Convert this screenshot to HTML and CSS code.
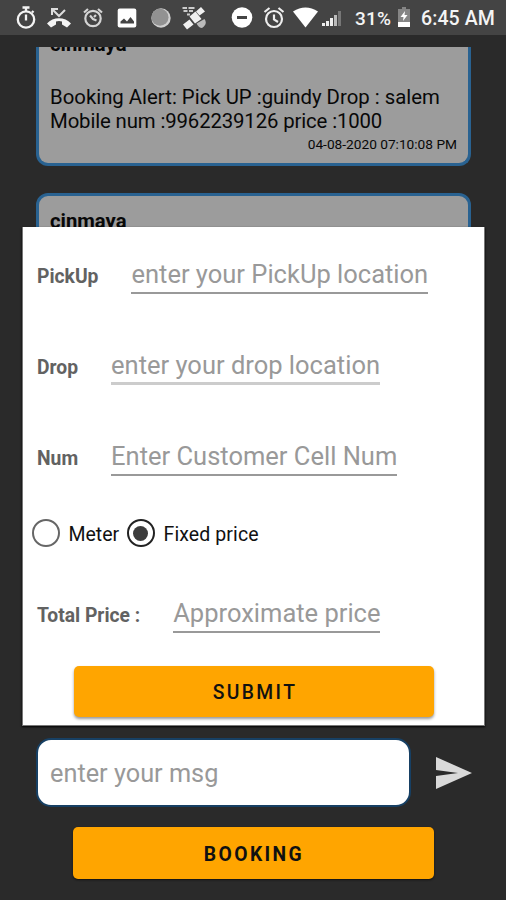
FILE: index.html
```html
<!DOCTYPE html>
<html lang="en">
<head>
<meta charset="utf-8">
<title>Booking</title>
<link rel="stylesheet" href="styles.css">
</head>
<body>
<div class="screen">
  <header class="status">
    <div class="notifications">
      <svg viewBox="0 0 22 24" fill="none" stroke="currentColor" stroke-width="2.3"><circle cx="11" cy="13.500" r="8.200"/><path d="M7.500 1.500h7M11 2v3M11 8.500v6M17 6.500l1.500-1.500"/></svg>
      <svg viewBox="0 0 26 24"><path fill="currentColor" d="M1 17.500C7 10.500 19 10.500 25 17.500l-4 4-5-3v-3q-3-1-6 0v3l-5 3z"/><path d="M6 9V3h6M6 3l7 7 6-6" fill="none" stroke="#ddd" stroke-width="2"/></svg>
      <svg viewBox="0 0 22 24" fill="none" stroke="#d4d4d4" stroke-width="2.200"><circle cx="11" cy="12.500" r="7.700"/><path d="M2 6.500l4-3.500M20 6.500l-4-3.500M8 9.500L11 13l3.500 1.500M14 9l-2 2"/></svg>
      <svg viewBox="0 0 22 24"><rect x="1.700" y="2.500" width="18.600" height="19" rx="2" fill="#fff"/><path fill="#444" d="M4.500 17.500v-2l3.500-3 3 3 3.500-4.500 3.500 4.500v2z"/></svg>
      <svg viewBox="0 0 22 24"><circle cx="11" cy="12" r="9.700" fill="#d0d0d0"/><circle cx="10" cy="11.200" r="8.500" fill="#929292"/></svg>
      <svg viewBox="0 0 26 24"><path fill="#f0f0f0" d="M15 5.500l5-4.500 4 4.500-5.500 4zM8.500 10.500l6-5 6 7.500-6.500 4.500zM2 18.500l6.500-5 4 5L6 23.500z"/><path fill="#bbb" d="M15.500 17.500l8-4.500q3.500 5-2.500 9-3 0-5.500-4.500z"/><path d="M1.500 2h4.500M7.500 2h6M2.500 5h4M8 5h4M6 8.500h3" fill="none" stroke="#ccc" stroke-width="2"/></svg>
    </div>
    <div class="system">
      <svg class="dnd" viewBox="0 0 22 24"><circle cx="11" cy="11.500" r="10.300" fill="#fff"/><path d="M6 11.500h10" stroke="#444" stroke-width="3"/></svg>
      <svg class="alarm" viewBox="0 0 22 24" fill="none" stroke="#eee" stroke-width="2.200"><circle cx="11" cy="13" r="8"/><path d="M1.500 6l5-4M20.500 6l-5-4M11 8.500v5l4 2.500"/></svg>
      <svg class="wifi" viewBox="0 0 25 24"><path fill="#fff" d="M0 5.500Q12.500-2.500 25 5.500L12.500 21.500z"/></svg>
      <svg class="signal" viewBox="0 0 19 24"><path fill="#eee" d="M0 17h3v3H0zM4 15h3v5H4zM8 12h3v8H8z"/><path fill="#bbb" d="M12 9h3v11h-3z"/><path fill="#777" d="M16 5h3v15h-3z"/></svg>
      <span class="percent">31%</span>
      <svg class="battery" viewBox="0 0 12 24"><path fill="#858585" d="M4 1h4v2h4v18H0V3h4z"/><path fill="#fff" d="M0 16h12v5H0zM7 5L2.500 11h3L5 15l4.500-6h-3z"/></svg>
      <span class="clock">6:45 AM</span>
    </div>
  </header>

  <main class="messages">
    <article class="card card-first">
      <div class="author">cinmaya</div>
      <p class="text">Booking Alert: Pick UP :guindy Drop : salem<br><span class="line-two">Mobile num :9962239126 price :1000</span></p>
      <div class="time">04-08-2020 07:10:08 PM</div>
    </article>
    <article class="card card-second">
      <div class="author">cinmaya</div>
    </article>
  </main>

  <footer class="composer">
    <div class="message-row">
      <div class="message-box">enter your msg</div>
      <svg class="send" viewBox="0 0 36 32"><path fill="#d9d9d9" d="M0 0l36 16L0 32V19l22-3L0 13z"/></svg>
    </div>
    <div class="button booking">BOOKING</div>
  </footer>

  <section class="dialog">
    <div class="field"><span class="label">PickUp</span><span class="input pickup">enter your PickUp location</span></div>
    <div class="field"><span class="label">Drop</span><span class="input drop">enter your drop location</span></div>
    <div class="field"><span class="label">Num</span><span class="input num">Enter Customer Cell Num</span></div>
    <div class="choices">
      <span class="radio"></span><span class="choice meter">Meter</span>
      <span class="radio checked"></span><span class="choice fixed">Fixed price</span>
    </div>
    <div class="field price-row"><span class="label total">Total Price :</span><span class="input price">Approximate price</span></div>
    <div class="button submit">SUBMIT</div>
  </section>
</div>
</body>
</html>
```
FILE: styles.css
```css
* { box-sizing: border-box; }
body { margin: 0; font-family: Roboto, "Liberation Sans", sans-serif; }
.screen {
  position: relative;
  display: flex;
  flex-direction: column;
  width: 506px;
  height: 900px;
  overflow: hidden;
  background: #2a2a2a;
  white-space: nowrap;
}
.status {
  display: flex;
  align-items: center;
  flex: 0 0 35px;
  background: #444;
  color: #f4f4f4;
}
.status svg { display: block; height: 24px; flex: none; }
.notifications { display: flex; width: 231px; padding-left: 12.5px; gap: 7.8px; }
.notifications svg { width: 26px; }
.system { display: flex; align-items: center; font-size: 18.5px; font-weight: 500; }
.dnd { width: 22px; margin-right: 10px; }
.alarm { width: 22px; margin-right: 8px; }
.wifi { width: 25px; margin-right: 4px; }
.signal { width: 19px; margin-right: 14px; }
.percent { width: 43px; padding-top: 1px; font-size: 19px; letter-spacing: 0.2px; }
.battery { width: 12px; margin-right: 11px; }
.clock { padding-top: 1px; font-size: 19.5px; letter-spacing: 0.1px; }

.messages { flex: 0 0 691px; margin-top: 12px; overflow: hidden; }
.card {
  width: 435px;
  margin-left: 36px;
  padding: 0 11px;
  border: 3px solid #296291;
  border-radius: 12px;
  background: #9c9c9c;
  color: #080808;
}
.card-first { height: 134px; border-top: 0; border-radius: 0 0 12px 12px; }
.card-second { height: 150px; margin-top: 27px; padding-top: 13px; }
.author { font-size: 20.3px; font-weight: 700; line-height: 24px; }
.card-first .author { margin-top: -15px; }
.text { margin: 29px 0 0; font-size: 20.35px; line-height: 24px; }
.line-two { letter-spacing: -0.13px; }
.time { margin-top: 3px; font-size: 13.7px; line-height: 16px; text-align: right; }

.composer { display: flex; flex-direction: column; align-items: center; }
.message-row { display: flex; align-items: center; align-self: stretch; padding-left: 36px; gap: 25px; }
.message-box {
  width: 375px;
  height: 69px;
  padding-left: 12px;
  border: 2px solid #174064;
  border-radius: 15px;
  background: #fff;
  color: #999;
  font-size: 25.3px;
  line-height: 68px;
}
.send { width: 36px; height: 32px; }
.button {
  width: 360px;
  height: 51px;
  padding-left: 2px;
  border-radius: 5px;
  background: #ffa500;
  color: #111;
  font-size: 19.3px;
  font-weight: 500;
  line-height: 53px;
  letter-spacing: 2.4px;
  text-align: center;
}
.booking { width: 361px; height: 52px; margin-top: 20px; line-height: 55px; font-weight: 700; box-shadow: 0 1px 2px #111; }

.dialog {
  position: absolute;
  left: 22px;
  top: 227px;
  width: 463px;
  height: 499px;
  border: 1px solid #777;
  border-top: 0;
  background: #fff;
  box-shadow: 0 1px 2px #000;
}
.field { display: flex; align-items: flex-start; height: 91px; padding: 30px 0 0 14px; }
.label { color: #626262; font-size: 19.3px; font-weight: 700; line-height: 39px; margin-right: 33px; }
.input { height: 37px; border-bottom: 2px solid #999; color: #999; font-size: 25.5px; line-height: 34px; }
.drop { border-bottom: 3px solid #ccc; }
.choices { display: flex; align-items: center; height: 40px; margin-top: 13px; padding-left: 8.5px; color: #111; font-size: 19.5px; }
.radio {
  display: flex;
  align-items: center;
  justify-content: center;
  width: 28px;
  height: 28px;
  border: 2px solid #666;
  border-radius: 50%;
}
.checked { border-color: #222; }
.checked::after { content: ""; width: 15px; height: 15px; border-radius: 50%; background: #3c3c3c; }
.choice { margin-left: 9px; padding-top: 3px; }
.meter { width: 50px; margin-right: 8px; }
.fixed { letter-spacing: 0.1px; }
.price-row { height: 113px; padding-top: 43px; }
.submit { margin: 0 0 0 51px; box-shadow: 0 2px 3px #999; }
```
